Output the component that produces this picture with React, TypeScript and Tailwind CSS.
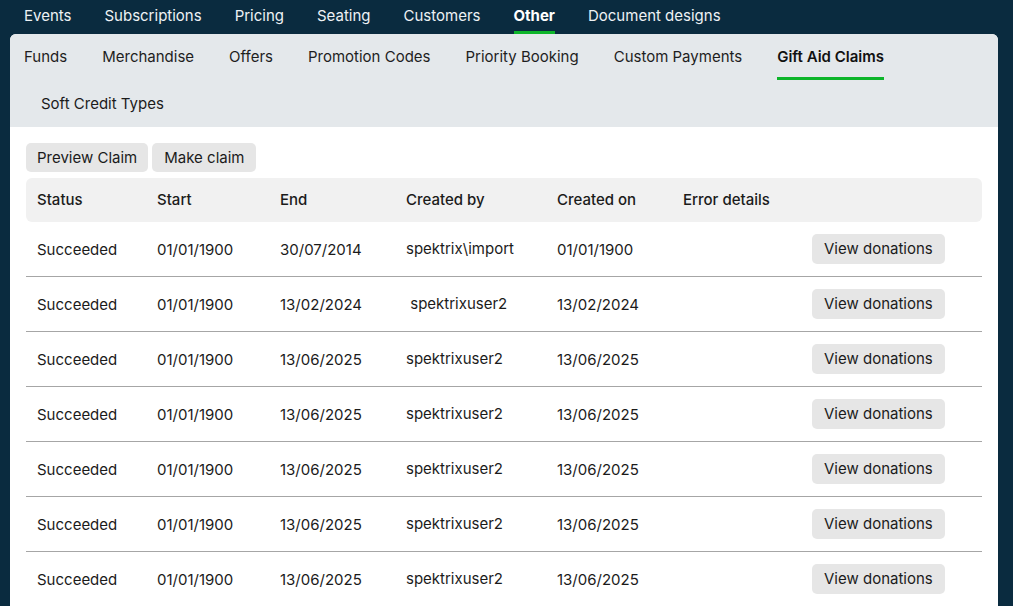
import React from 'react'

const topNav = ['Events', 'Subscriptions', 'Pricing', 'Seating', 'Customers', 'Other', 'Document designs']
const subTabs = ['Funds', 'Merchandise', 'Offers', 'Promotion Codes', 'Priority Booking', 'Custom Payments', 'Gift Aid Claims']

type Claim = { status: string; start: string; end: string; createdBy: string; createdOn: string }

const claims: Claim[] = [
  { status: 'Succeeded', start: '01/01/1900', end: '30/07/2014', createdBy: 'spektrix\\import', createdOn: '01/01/1900' },
  { status: 'Succeeded', start: '01/01/1900', end: '13/02/2024', createdBy: '\u00a0spektrixuser2', createdOn: '13/02/2024' },
  { status: 'Succeeded', start: '01/01/1900', end: '13/06/2025', createdBy: 'spektrixuser2', createdOn: '13/06/2025' },
  { status: 'Succeeded', start: '01/01/1900', end: '13/06/2025', createdBy: 'spektrixuser2', createdOn: '13/06/2025' },
  { status: 'Succeeded', start: '01/01/1900', end: '13/06/2025', createdBy: 'spektrixuser2', createdOn: '13/06/2025' },
  { status: 'Succeeded', start: '01/01/1900', end: '13/06/2025', createdBy: 'spektrixuser2', createdOn: '13/06/2025' },
  { status: 'Succeeded', start: '01/01/1900', end: '13/06/2025', createdBy: 'spektrixuser2', createdOn: '13/06/2025' },
]

const cols = 'grid grid-cols-[120px_123px_126px_151px_126px_1fr_170px] items-center'

export default function App() {
  return (
    <div className="h-screen overflow-hidden bg-[#0a2b3f] font-['Inter',sans-serif] text-[15px] text-[#1b1b1b]">
      {/* top nav */}
      <nav className="flex h-[34px] gap-[33px] pl-[24px]">
        {topNav.map((item) => {
          const active = item === 'Other'
          return (
            <div key={item} className="flex flex-col justify-between pt-[5px]">
              <span className={active ? 'font-bold text-white' : 'text-[#eef2f5]'}>{item}</span>
              <span className={active ? 'h-[3px] bg-[#0db52a]' : 'h-[3px]'} />
            </div>
          )
        })}
      </nav>

      <div className="ml-[10px] mr-[15px] overflow-hidden rounded-t-[6px] bg-white">
        {/* sub tabs */}
        <div className="bg-[#e4e8eb] pb-[12px]">
          <div className="flex h-[46px] gap-[35px] pl-[14px]">
            {subTabs.map((tab) => {
              const active = tab === 'Gift Aid Claims'
              return (
                <div key={tab} className="flex flex-col justify-between pt-[12px]">
                  <span className={active ? 'font-semibold text-[#111]' : 'text-[#1e1e1e]'}>{tab}</span>
                  <span className={active ? 'h-[3px] bg-[#0db52a]' : 'h-[3px]'} />
                </div>
              )
            })}
          </div>
          <div className="pl-[31px] pt-[12px] leading-[23px]">Soft Credit Types</div>
        </div>

        {/* content */}
        <div className="px-[16px] pt-[16px]">
          <div className="flex gap-[4px]">
            <button className="h-[29px] rounded-[5px] bg-[#e6e6e6] px-[11px] pt-[2px]">Preview Claim</button>
            <button className="h-[29px] rounded-[5px] bg-[#e6e6e6] px-[12px] pt-[2px]">Make claim</button>
          </div>

          <div className={`${cols} mt-[6px] h-[44px] rounded-[6px] bg-[#f1f1f1] pl-[11px] pt-[1px] font-medium`}>
            <span>Status</span>
            <span>Start</span>
            <span>End</span>
            <span>Created by</span>
            <span>Created on</span>
            <span>Error details</span>
            <span />
          </div>

          {claims.map((c, i) => (
            <div key={i} className={`${cols} h-[55px] border-b border-[#a6a6a6] pl-[11px]`}>
              <span className="pt-[2px]">{c.status}</span>
              <span className="pt-[2px]">{c.start}</span>
              <span className="pt-[2px]">{c.end}</span>
              <span>{c.createdBy}</span>
              <span className="pt-[2px]">{c.createdOn}</span>
              <span />
              <div>
                <button className="h-[30px] rounded-[5px] bg-[#e6e6e6] px-[12px] pt-[1px]">View donations</button>
              </div>
            </div>
          ))}
        </div>
      </div>
    </div>
  )
}
